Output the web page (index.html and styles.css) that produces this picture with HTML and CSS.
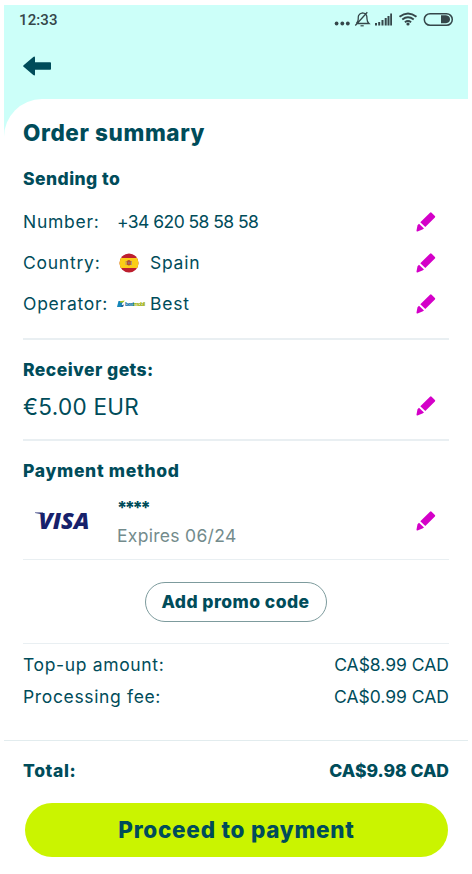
FILE: index.html
```html
<!DOCTYPE html>
<html lang="en">
  <head>
    <meta charset="UTF-8" />
    <meta name="viewport" content="width=device-width, initial-scale=1.0" />
    <title>Order summary</title>
    <link rel="stylesheet" href="styles.css">
  </head>
  <body>
    <svg width="0" height="0" class="defs">
      <symbol id="pencil" viewBox="0 0 20 20">
        <path d="M14 .7q.8-.7 1.600 0l3.300 3.200q.7.800 0 1.600L9.300 15 4.300 10.200zM3 11.700l5 4.800-1.600 1.100-4.900 1.900q-1.200.2-1-1l1-5.200z" fill="#d400c8" />
      </symbol>
    </svg>
    <div class="phone">
      <div class="status">
        <span class="time">12:33</span>
        <svg class="status-icons" width="120" height="16" viewBox="0 0 120 16">
          <g fill="#35474a">
            <circle cx="2.600" cy="12.500" r="1.900" />
            <circle cx="8.300" cy="12.500" r="1.900" />
            <circle cx="13.800" cy="12.500" r="1.900" />
            <path d="M41 12h2v2.500h-2zM44.200 11h2v3.500h-2zM47.500 9h2v5.500h-2zM50.700 7h2v7.500h-2zM53.500 5h2v9.500h-2zM56.200 2.500h1.800v12h-1.800z" />
            <circle cx="74" cy="13" r="1.600" />
            <path d="M107 4.300h5q4 .5 4 4t-4 4h-5z" />
          </g>
          <g fill="none" stroke="#35474a">
            <path d="M23.500 12.500H35q-2-1.800-2-4.500t-.6-4q-1.200-2-3.800-2.200-2.900.2-4 2.700-.4 1-.4 3.800 0 2.400-1.800 4.200M21.300 14.500 33.300 1.300" stroke-width="1.300" />
            <path d="M26.500 14.800h3.200" stroke-width="1.200" />
            <path d="M65.500 5.800q8.500-6.600 17 0M68.300 8.500q5.700-4.500 11.400 0M70.900 11.200q3.100-2.400 6.200 0" stroke-width="1.900" />
            <rect x="90.300" y="2.700" width="28" height="11.600" rx="5.800" stroke-width="1.500" />
          </g>
        </svg>
      </div>
      <div class="nav">
        <svg width="29" height="20" viewBox="0 0 29 20">
          <path d="M.6 9.200 10.300.9q1.700-1 1.700.8v4.500h15.200q.8 0 .8.800v6q0 .8-.8.800H12v4.700q0 1.600-1.700.6L.6 10.800q-.9-.8 0-1.600z" fill="#004c5a" />
        </svg>
      </div>

      <div class="sheet">
        <h1>Order summary</h1>

        <div class="section sending">
          <h2>Sending to</h2>
          <div class="row">
            <span class="label">Number:</span>
            <span class="number">+34 620 58 58 58</span>
            <svg class="edit"><use href="#pencil" /></svg>
          </div>
          <div class="row">
            <span class="label">Country:</span>
            <svg class="flag" width="20" height="20" viewBox="0 0 20 20">
              <clipPath id="round"><circle cx="10" cy="10" r="9.500" /></clipPath>
              <g clip-path="url(#round)">
                <rect width="20" height="20" fill="#bd1f2e" />
                <rect y="5" width="20" height="10" fill="#fbce16" />
                <path d="M6.500 8h1v4h-1zM12 8h1v4h-1z" fill="#b59a72" />
                <path d="M7.800 8.200q2-2.400 4 0v3q-2 2.600-4 0z" fill="#b4532f" />
                <path d="M9.200 9.200h1.400v1.500H9.200z" fill="#8b7aa0" />
              </g>
            </svg>
            <span class="value">Spain</span>
            <svg class="edit"><use href="#pencil" /></svg>
          </div>
          <div class="row">
            <span class="label">Operator:</span>
            <svg class="operator-mark" width="8" height="8" viewBox="0 0 8 8">
              <path d="M1.500 1h5L4.800 4.300 6 7H0z" fill="#1686b9" />
              <path d="M3 1.200 7.800.6 6.500 2.300 3.300 2.800z" fill="#a9c51c" />
              <path d="M4.500 5.200 7 4.500 6.200 6.400 4 6.800z" fill="#1e5a94" />
            </svg>
            <span class="operator-name">best<b>mobil</b></span>
            <span class="value">Best</span>
            <svg class="edit"><use href="#pencil" /></svg>
          </div>
        </div>

        <div class="section receiver">
          <h2>Receiver gets:</h2>
          <div class="row">
            <span class="amount">€5.00 EUR</span>
            <svg class="edit"><use href="#pencil" /></svg>
          </div>
        </div>

        <div class="section payment">
          <h2>Payment method</h2>
          <div class="row">
            <svg class="visa" width="58" height="36" viewBox="0 -8 58 36">
              <path d="M0 1.500h8L9 4.300Q5 2.200 0 2z" fill="#17216b" />
              <text x="3.500" y="17.500" textLength="51" lengthAdjust="spacingAndGlyphs">VISA</text>
            </svg>
            <div class="card">
              <span class="stars">****</span>
              <span class="expires">Expires 06/24</span>
            </div>
            <svg class="edit"><use href="#pencil" /></svg>
          </div>
        </div>

        <div class="section promo">
          <button class="promo-btn">Add promo code</button>
        </div>

        <div class="costs">
          <div class="cost"><span>Top-up amount:</span><span class="price">CA$8.99 CAD</span></div>
          <div class="cost"><span>Processing fee:</span><span class="price">CA$0.99 CAD</span></div>
        </div>

        <div class="footer">
          <div class="total"><span>Total:</span><span class="price">CA$9.98 CAD</span></div>
          <button class="pay-btn">Proceed to payment</button>
        </div>
      </div>
    </div>
  </body>
</html>
```

FILE: styles.css
```css
* {
  box-sizing: border-box;
}
body {
  margin: 0;
  background: #fff;
  color: #004c5a;
  font-family: Inter, "Work Sans", sans-serif;
  font-size: 17.5px;
  overflow: hidden;
}
.defs {
  display: block;
}
.phone {
  margin: 5px 4px 0;
  background: #ccfff9;
}
.status {
  display: flex;
  justify-content: space-between;
  height: 30px;
  padding: 5px 14px 0 15px;
}
.time {
  font: 500 15px/20px Roboto, sans-serif;
  letter-spacing: 0.1px;
  color: #35474a;
}
.status-icons {
  margin-top: 1px;
}
.nav {
  height: 64px;
  padding: 21px 19px 0;
}
.nav svg {
  display: block;
}
.sheet {
  height: 775px;
  padding-top: 14px;
  background: #fff;
  border-top-left-radius: 38px;
}
h1 {
  margin: 0 19px 13px;
  font-size: 22.5px;
  line-height: 40px;
  font-weight: 800;
  letter-spacing: 0.6px;
}
h2 {
  margin: 0;
  font-size: 17.5px;
  line-height: 26px;
  font-weight: 800;
  letter-spacing: 0.45px;
}
h1,
h2,
span {
  white-space: nowrap;
}
.section {
  margin: 0 19px;
  border-bottom: 2px solid #e9eff2;
}
.row {
  display: flex;
  align-items: center;
}
.label {
  width: 94px;
}
.label,
.value {
  letter-spacing: 0.75px;
}
.number {
  letter-spacing: -0.55px;
}
.edit {
  width: 20px;
  height: 20px;
  margin-left: auto;
  margin-right: 13px;
}
.sending {
  height: 174px;
}
.sending h2 {
  margin-bottom: 9px;
}
.sending .row {
  height: 41px;
}
.flag {
  margin: 0 11px 0 2px;
}
.operator-name {
  width: 25px;
  font: 900 6px/8px Roboto, sans-serif;
  letter-spacing: -0.85px;
  color: #1577ad;
}
.operator-name b {
  font-weight: 900;
  color: #a3b51c;
}
.receiver {
  height: 101px;
  padding-top: 17px;
}
.receiver .row {
  height: 36px;
  margin-top: 5px;
}
.amount {
  font-size: 22.5px;
  letter-spacing: 0.3px;
}
.payment {
  height: 119px;
  padding-top: 17px;
  border-bottom-width: 1px;
}
.payment h2 {
  letter-spacing: 0.7px;
}
.payment .row {
  height: 60px;
  margin-top: 7px;
}
.visa {
  margin: 0 25px 0 12px;
  font: italic 800 22px "Open Sans", sans-serif;
  fill: #17216b;
}
.card {
  display: flex;
  flex-direction: column;
  margin-left: -1px;
}
.stars {
  height: 28px;
  line-height: 31px;
  font-weight: 800;
  letter-spacing: -2.4px;
}
.expires {
  line-height: 31px;
  color: #738b8c;
  letter-spacing: 0.3px;
}
.promo {
  height: 84px;
  padding-top: 22px;
  text-align: center;
  border-bottom-width: 1px;
}
button {
  display: inline-block;
  padding: 0;
  color: inherit;
  font-family: inherit;
  font-weight: 800;
  white-space: nowrap;
}
.promo-btn {
  width: 182px;
  height: 40px;
  margin-right: 1px;
  padding-bottom: 2px;
  border: 1px solid #7d9b9d;
  border-radius: 20px;
  background: #fff;
  font-size: 17.5px;
  letter-spacing: 0.45px;
}
.costs {
  height: 96px;
  margin: 0 19px;
  padding-top: 5px;
}
.cost,
.total {
  display: flex;
  justify-content: space-between;
  line-height: 32px;
  letter-spacing: 0.65px;
}
.price {
  letter-spacing: 0;
}
.footer {
  border-top: 1px solid #e2ecee;
  padding: 14px 19px 0;
}
.total {
  font-size: 17.5px;
  font-weight: 800;
}
.pay-btn {
  display: block;
  width: 423px;
  height: 54px;
  margin: 16px 0 0 2px;
  padding-bottom: 2px;
  border: 0;
  border-radius: 27px;
  background: #caf400;
  font-size: 22.5px;
  letter-spacing: 0.75px;
}
```
